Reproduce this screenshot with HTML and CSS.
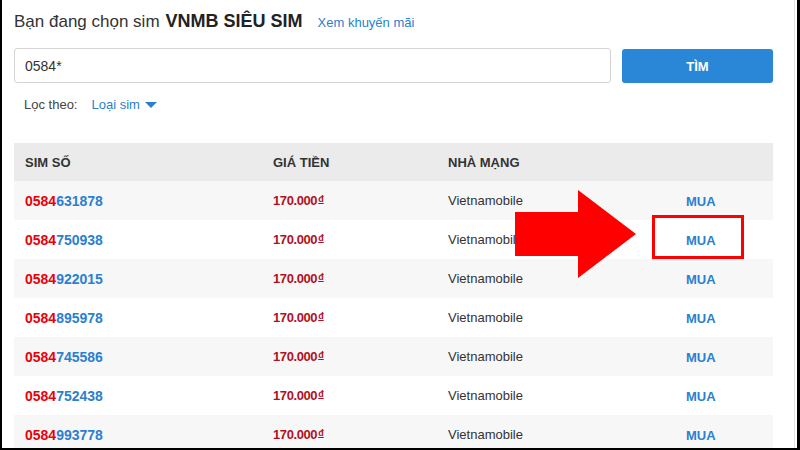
FILE: index.html
```html
<!DOCTYPE html>
<html lang="vi">
<head>
<meta charset="utf-8">
<title>Chọn sim VNMB</title>
<link rel="stylesheet" href="styles.css">
</head>
<body>
<div class="frame">
  <div class="page">
    <div class="title">
      <span class="lead">Bạn đang chọn sim</span>
      <strong class="brand">VNMB SIÊU SIM</strong>
      <a class="promo" href="#">Xem khuyến mãi</a>
    </div>

    <div class="search">
      <input class="search-input" type="text" value="0584*">
      <button class="search-btn" type="button">TÌM</button>
    </div>

    <div class="filter">
      <span class="filter-label">Lọc theo:</span>
      <a class="filter-link" href="#">Loại sim <span class="caret"></span></a>
    </div>

    <div class="table">
      <div class="row head">
        <div class="cell">SIM SỐ</div>
        <div class="cell">GIÁ TIỀN</div>
        <div class="cell">NHÀ MẠNG</div>
        <div class="cell"></div>
      </div>
      <div class="row">
        <div class="cell num"><span class="pre">0584</span>631878</div>
        <div class="cell price">170.000<u>đ</u></div>
        <div class="cell net">Vietnamobile</div>
        <div class="cell buy"><a href="#">MUA</a></div>
      </div>
      <div class="row">
        <div class="cell num"><span class="pre">0584</span>750938</div>
        <div class="cell price">170.000<u>đ</u></div>
        <div class="cell net">Vietnamobile</div>
        <div class="cell buy"><a href="#">MUA</a></div>
      </div>
      <div class="row">
        <div class="cell num"><span class="pre">0584</span>922015</div>
        <div class="cell price">170.000<u>đ</u></div>
        <div class="cell net">Vietnamobile</div>
        <div class="cell buy"><a href="#">MUA</a></div>
      </div>
      <div class="row">
        <div class="cell num"><span class="pre">0584</span>895978</div>
        <div class="cell price">170.000<u>đ</u></div>
        <div class="cell net">Vietnamobile</div>
        <div class="cell buy"><a href="#">MUA</a></div>
      </div>
      <div class="row">
        <div class="cell num"><span class="pre">0584</span>745586</div>
        <div class="cell price">170.000<u>đ</u></div>
        <div class="cell net">Vietnamobile</div>
        <div class="cell buy"><a href="#">MUA</a></div>
      </div>
      <div class="row">
        <div class="cell num"><span class="pre">0584</span>752438</div>
        <div class="cell price">170.000<u>đ</u></div>
        <div class="cell net">Vietnamobile</div>
        <div class="cell buy"><a href="#">MUA</a></div>
      </div>
      <div class="row">
        <div class="cell num"><span class="pre">0584</span>993778</div>
        <div class="cell price">170.000<u>đ</u></div>
        <div class="cell net">Vietnamobile</div>
        <div class="cell buy"><a href="#">MUA</a></div>
      </div>
    </div>
  </div>

  <!-- highlight marker pointing at the second buy link -->
  <svg class="arrow" width="121" height="88" viewBox="0 0 121 88">
    <polygon points="0,22 63,22 63,0 121,44 63,88 63,66 0,66" fill="#ff0000"/>
  </svg>
  <div class="highlight"></div>
</div>
</body>
</html>
```

FILE: styles.css
```css
html, body {
  margin: 0;
  padding: 0;
  background: #fff;
}

.frame {
  position: relative;
  width: 800px;
  height: 450px;
  box-sizing: border-box;
  border-left: 2px solid #000;
  border-right: 3px solid #000;
  border-bottom: 2px solid #000;
  overflow: hidden;
  font-family: "Liberation Sans", Arial, sans-serif;
  color: #333;
}

.page {
  height: 100%;
  box-sizing: border-box;
  padding: 9px 0 0 12px;
  margin-right: 2px;
  border-right: 1px solid #e2e2e2;
}

.title {
  display: flex;
  align-items: baseline;
  height: 24px;
  line-height: 24px;
  white-space: nowrap;
}

.lead {
  font-size: 17px;
  color: #333;
}

.brand {
  font-size: 18px;
  font-weight: bold;
  color: #222;
  margin-left: 6px;
}

.promo {
  font-size: 13px;
  color: #2b7fcf;
  text-decoration: none;
  margin-left: 15px;
}

.search {
  display: flex;
  align-items: flex-start;
  gap: 11px;
  margin-top: 15px;
  width: 759px;
}

.search-input {
  flex: 1;
  height: 35px;
  box-sizing: border-box;
  border: 1px solid #d4d4d4;
  border-radius: 3px;
  padding: 0 10px;
  font-family: "Liberation Sans", Arial, sans-serif;
  font-size: 14px;
  color: #333;
  outline: none;
  margin: 0;
}

.search-btn {
  width: 151px;
  height: 34px;
  margin-top: 1px;
  border: 0;
  border-radius: 3px;
  background: #2a87d8;
  color: #fff;
  font-family: "Liberation Sans", Arial, sans-serif;
  font-size: 13px;
  font-weight: bold;
  padding: 0;
}

.filter {
  display: flex;
  align-items: center;
  gap: 14px;
  margin-top: 11px;
  padding-left: 10px;
  height: 20px;
  font-size: 13px;
}

.filter-label {
  color: #444;
}

.filter-link {
  color: #2b7fcf;
  text-decoration: none;
  display: flex;
  align-items: center;
  gap: 5px;
}

.caret {
  width: 0;
  height: 0;
  border-left: 6px solid transparent;
  border-right: 6px solid transparent;
  border-top: 6px solid #2b7fcf;
  margin-top: 2px;
}

.table {
  width: 759px;
  margin-top: 29px;
}

.row {
  display: grid;
  grid-template-columns: 248px 175px 1fr 88px;
  height: 39px;
  align-items: center;
}

.row:nth-child(even) {
  background: #f7f7f7;
}

.row.head {
  height: 38px;
  background: #ebebeb;
  font-size: 13px;
  font-weight: bold;
  color: #333;
}

.cell {
  padding-left: 11px;
  white-space: nowrap;
}

.num {
  font-size: 14px;
  font-weight: bold;
  color: #2b7fcf;
}

.num .pre {
  color: #e8000b;
}

.price {
  font-size: 13px;
  font-weight: bold;
  color: #b3101f;
  letter-spacing: -0.4px;
}

.price u {
  font-size: 9px;
  vertical-align: 3px;
  letter-spacing: 0;
  margin-left: 1px;
}

.net {
  font-size: 13px;
  color: #333;
}

.buy {
  padding-left: 1px;
}

.buy a {
  font-size: 13px;
  font-weight: bold;
  color: #2b7fcf;
  text-decoration: none;
}

.arrow {
  position: absolute;
  left: 513px;
  top: 190px;
  display: block;
}

.highlight {
  position: absolute;
  left: 650px;
  top: 215px;
  width: 92px;
  height: 44px;
  box-sizing: border-box;
  border: 3px solid #ff0000;
}
```
